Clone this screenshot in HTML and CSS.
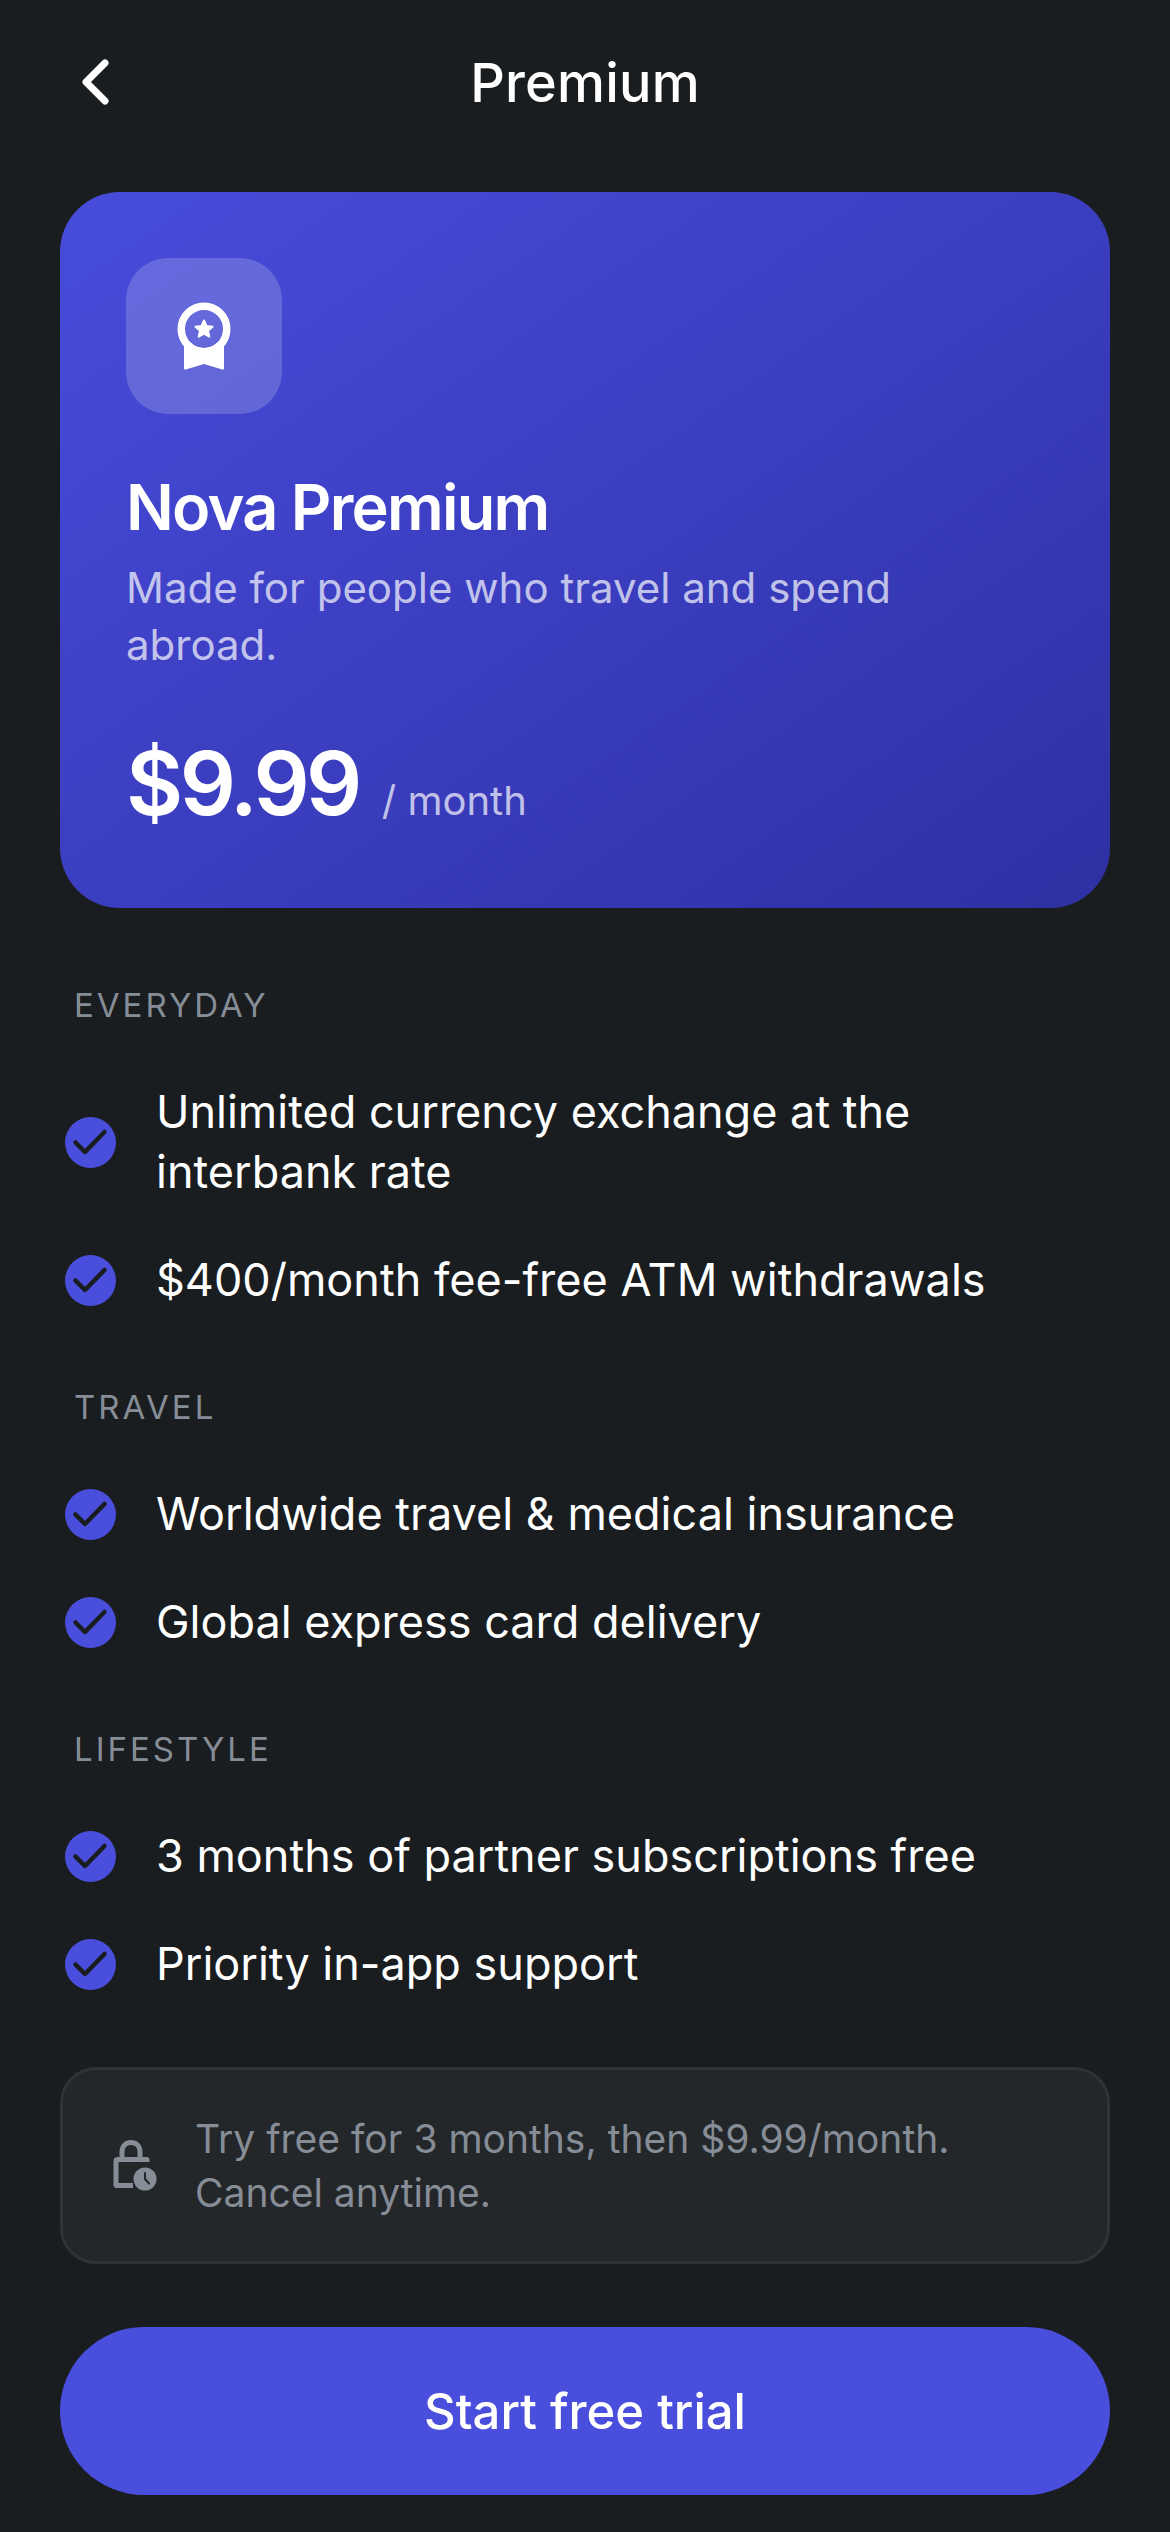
FILE: index.html
```html
<!DOCTYPE html>
<html lang="en">
  <head>
    <meta charset="UTF-8" />
    <meta name="viewport" content="width=device-width, initial-scale=1.0" />
    <title>Premium</title>
    <link rel="stylesheet" href="styles.css">
  </head>
  <body>
    <div class="screen">
      <header class="topbar">
        <svg class="back-icon" viewBox="0 0 36 48" width="36" height="48">
          <path d="M28 5 L9 24 L28 43" fill="none" stroke="#fff" stroke-width="7" stroke-linecap="round" stroke-linejoin="round" />
        </svg>
        <h1>Premium</h1>
      </header>

      <section class="plan-card">
        <div class="plan-icon">
          <svg viewBox="0 0 54 68" width="54" height="68">
            <path d="M7 43 V66 C7 67.500 8 68 9.500 67.300 L27 62 L44.500 67.300 C46 68 47 67.500 47 66 V43 L40.400 40.400 A19 19 0 0 1 13.600 40.400 Z" fill="#fff" />
            <circle cx="27" cy="27" r="22.750" fill="none" stroke="#fff" stroke-width="7.500" />
            <path d="M27 18.500 L29.500 24 L35.500 24.700 L31 28.700 L32.300 34.600 L27 31.600 L21.700 34.600 L23 28.700 L18.500 24.700 L24.500 24 Z" fill="#fff" stroke="#fff" stroke-width="2" stroke-linejoin="round" />
          </svg>
        </div>
        <h2>Nova Premium</h2>
        <p class="plan-desc">Made for people who travel and spend abroad.</p>
        <div class="plan-price">
          <span class="amount">$9.99</span>
          <span class="period">/ month</span>
        </div>
      </section>

      <section class="features">
        <h3>EVERYDAY</h3>
        <ul>
          <li><svg class="check" viewBox="0 0 51 51"><circle cx="25.500" cy="25.500" r="25.500" fill="#4a4edd" /><path d="M10.500 25.500 L20 35 L39.500 15" fill="none" stroke="#191d20" stroke-width="4.500" stroke-linecap="round" stroke-linejoin="round" /></svg><span>Unlimited currency exchange at the interbank rate</span></li>
          <li><svg class="check" viewBox="0 0 51 51"><circle cx="25.500" cy="25.500" r="25.500" fill="#4a4edd" /><path d="M10.500 25.500 L20 35 L39.500 15" fill="none" stroke="#191d20" stroke-width="4.500" stroke-linecap="round" stroke-linejoin="round" /></svg><span>$400/month fee-free ATM withdrawals</span></li>
        </ul>
      </section>

      <section class="features">
        <h3>TRAVEL</h3>
        <ul>
          <li><svg class="check" viewBox="0 0 51 51"><circle cx="25.500" cy="25.500" r="25.500" fill="#4a4edd" /><path d="M10.500 25.500 L20 35 L39.500 15" fill="none" stroke="#191d20" stroke-width="4.500" stroke-linecap="round" stroke-linejoin="round" /></svg><span>Worldwide travel &amp; medical insurance</span></li>
          <li><svg class="check" viewBox="0 0 51 51"><circle cx="25.500" cy="25.500" r="25.500" fill="#4a4edd" /><path d="M10.500 25.500 L20 35 L39.500 15" fill="none" stroke="#191d20" stroke-width="4.500" stroke-linecap="round" stroke-linejoin="round" /></svg><span>Global express card delivery</span></li>
        </ul>
      </section>

      <section class="features">
        <h3>LIFESTYLE</h3>
        <ul>
          <li><svg class="check" viewBox="0 0 51 51"><circle cx="25.500" cy="25.500" r="25.500" fill="#4a4edd" /><path d="M10.500 25.500 L20 35 L39.500 15" fill="none" stroke="#191d20" stroke-width="4.500" stroke-linecap="round" stroke-linejoin="round" /></svg><span>3 months of partner subscriptions free</span></li>
          <li><svg class="check" viewBox="0 0 51 51"><circle cx="25.500" cy="25.500" r="25.500" fill="#4a4edd" /><path d="M10.500 25.500 L20 35 L39.500 15" fill="none" stroke="#191d20" stroke-width="4.500" stroke-linecap="round" stroke-linejoin="round" /></svg><span>Priority in-app support</span></li>
        </ul>
      </section>

      <div class="notice">
        <svg class="notice-icon" viewBox="0 0 44 51" width="44" height="51">
          <path d="M9 18 V12 C9 6 13 2.500 18 2.500 C23 2.500 27 6 27 12 V18" fill="none" stroke="#868d96" stroke-width="5" />
          <path d="M4.500 17 H33.500 A3 3 0 0 1 36.500 20 V22 H5.500 V43 H20 V48 H4 A3 3 0 0 1 0.500 44.500 V21 A4 4 0 0 1 4.500 17 Z" fill="#868d96" />
          <circle cx="32" cy="39" r="11.500" fill="#868d96" />
          <path d="M32 33 V39 L36 43.500" fill="none" stroke="#23272a" stroke-width="2" stroke-linecap="round" />
        </svg>
        <p>Try free for 3 months, then $9.99/month. Cancel anytime.</p>
      </div>

      <button class="cta">Start free trial</button>
    </div>
  </body>
</html>
```

FILE: styles.css
```css
* {
  box-sizing: border-box;
}
html,
body {
  margin: 0;
  padding: 0;
  background-color: #191d20;
}
body {
  font-family: Inter, "Noto Sans", sans-serif;
  color: #ffffff;
}
.screen {
  width: 1170px;
  height: 2532px;
  padding: 0 60px;
  overflow: hidden;
}
.topbar {
  height: 192px;
  padding-bottom: 28px;
  display: flex;
  align-items: center;
  justify-content: center;
  position: relative;
}
.back-icon {
  position: absolute;
  left: 17px;
  top: 58px;
}
.topbar h1 {
  margin: 0;
  font-size: 54px;
  font-weight: 500;
  letter-spacing: 0.200px;
}
.plan-card {
  height: 716px;
  padding: 66px;
  border-radius: 60px;
  background: linear-gradient(145deg, #484cdc 0%, #2e30a3 100%);
}
.plan-icon {
  width: 156px;
  height: 156px;
  border-radius: 42px;
  background-color: rgba(255, 255, 255, 0.18);
  display: flex;
  align-items: center;
  justify-content: center;
}
.plan-card h2 {
  margin: 57px 0 0;
  font-size: 63px;
  line-height: 72px;
  font-weight: 600;
  letter-spacing: -1.750px;
}
.plan-desc {
  margin: 16px 0 0;
  font-size: 42px;
  line-height: 57px;
  color: rgba(255, 255, 255, 0.7);
}
.plan-price {
  margin-top: 60px;
  display: flex;
  align-items: baseline;
  gap: 23px;
}
.amount {
  font-size: 88px;
  line-height: 100px;
  font-weight: 600;
  letter-spacing: -3.600px;
}
.period {
  font-size: 40px;
  color: rgba(255, 255, 255, 0.7);
}
.features {
  margin-top: 77px;
}
.features + .features {
  margin-top: 53px;
}
.features h3 {
  margin: 0;
  padding-left: 14px;
  font-size: 33px;
  line-height: 40px;
  font-weight: 400;
  letter-spacing: 3px;
  color: #868d96;
}
.features ul {
  list-style: none;
  margin: 33px 0 0;
  padding: 0;
}
.features li {
  display: flex;
  align-items: center;
  gap: 40px;
  padding: 24px 20px 24px 5px;
  font-size: 45px;
  line-height: 60px;
}
.check {
  width: 51px;
  height: 51px;
  flex: none;
}
.notice {
  margin-top: 49px;
  height: 197px;
  padding: 0 48px 0 50px;
  display: flex;
  align-items: center;
  gap: 38px;
  background-color: #23272a;
  border: 3px solid #2e3337;
  border-radius: 36px;
}
.notice-icon {
  flex: none;
}
.notice p {
  margin: 0;
  font-size: 39px;
  line-height: 54px;
  color: #868d96;
}
.cta {
  display: block;
  width: 100%;
  height: 168px;
  margin-top: 63px;
  border: none;
  border-radius: 84px;
  background-color: #4a4edd;
  color: #ffffff;
  font-family: inherit;
  font-size: 49px;
  font-weight: 500;
}
```
